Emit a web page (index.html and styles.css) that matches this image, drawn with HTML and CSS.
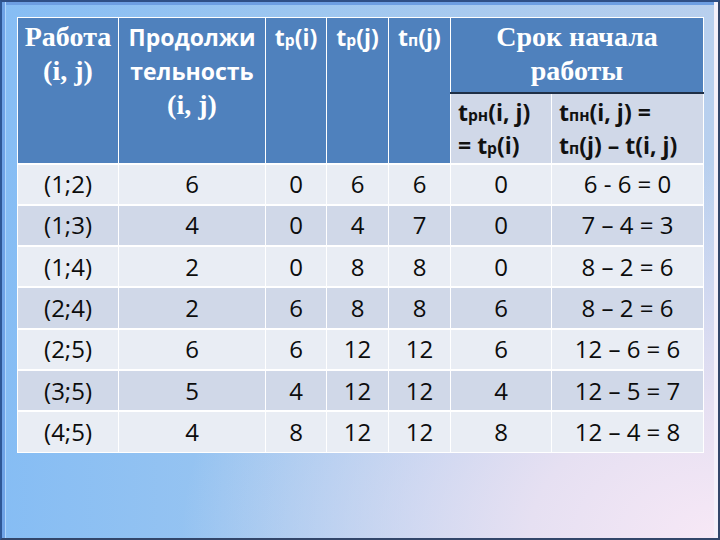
FILE: index.html
```html
<!DOCTYPE html>
<html lang="ru">
<head>
<meta charset="utf-8">
<title>Сроки начала работ</title>
<link rel="stylesheet" href="styles.css">
</head>
<body>
<div class="slide">
  <table class="grid">
    <colgroup>
      <col class="c1"><col class="c2"><col class="c3"><col class="c4"><col class="c5"><col class="c6"><col class="c7">
    </colgroup>
    <thead>
      <tr class="h1">
        <th rowspan="2" class="hd serif">Работа<br>(i, j)</th>
        <th rowspan="2" class="hd">Продолжи<br>тельность<br><span class="serif">(i, j)</span></th>
        <th rowspan="2" class="hd">t<span class="sub">р</span>(i)</th>
        <th rowspan="2" class="hd">t<span class="sub">р</span>(j)</th>
        <th rowspan="2" class="hd">t<span class="sub">п</span>(j)</th>
        <th colspan="2" class="hd serif">Срок начала<br>работы</th>
      </tr>
      <tr class="h2">
        <th class="sh">t<span class="sub">рн</span>(i, j)<br>= t<span class="sub">р</span>(i)</th>
        <th class="sh">t<span class="sub">пн</span>(i, j) =<br>t<span class="sub">п</span>(j) – t(i, j)</th>
      </tr>
    </thead>
    <tbody>
      <tr class="lt"><td>(1;2)</td><td>6</td><td>0</td><td>6</td><td>6</td><td>0</td><td>6 - 6 = 0</td></tr>
      <tr class="dk"><td>(1;3)</td><td>4</td><td>0</td><td>4</td><td>7</td><td>0</td><td>7 – 4 = 3</td></tr>
      <tr class="lt"><td>(1;4)</td><td>2</td><td>0</td><td>8</td><td>8</td><td>0</td><td>8 – 2 = 6</td></tr>
      <tr class="dk"><td>(2;4)</td><td>2</td><td>6</td><td>8</td><td>8</td><td>6</td><td>8 – 2 = 6</td></tr>
      <tr class="lt"><td>(2;5)</td><td>6</td><td>6</td><td>12</td><td>12</td><td>6</td><td>12 – 6 = 6</td></tr>
      <tr class="dk"><td>(3;5)</td><td>5</td><td>4</td><td>12</td><td>12</td><td>4</td><td>12 – 5 = 7</td></tr>
      <tr class="lt"><td>(4;5)</td><td>4</td><td>8</td><td>12</td><td>12</td><td>8</td><td>12 – 4 = 8</td></tr>
    </tbody>
  </table>
</div>
</body>
</html>
```
FILE: styles.css
```css
html, body {
  margin: 0;
  padding: 0;
}
body {
  width: 720px;
  height: 540px;
  overflow: hidden;
}
.slide {
  box-sizing: border-box;
  width: 720px;
  height: 540px;
  border: 2px solid #33466a;
  border-left-color: #2f5896;
  border-top-color: #2f4f86;
  padding: 15px 0 0 15px;
  background:
    radial-gradient(ellipse 75% 70% at 100% 100%, #f7e8f6 0%, #e6e0f2 35%, rgba(200, 216, 238, 0) 100%),
    linear-gradient(90deg, #86bdf4 0%, #9cc6f0 40%, #b9d0ee 100%);
  box-shadow: inset 3px 0 0 #6fa3e6, inset 4px 0 0 #b0d6fb, inset -4px 0 0 #f4f0fa, inset 0 3px 0 #6d9ee2;
  font-family: "Open Sans", "DejaVu Sans", sans-serif;
}
.grid {
  border-collapse: collapse;
  table-layout: fixed;
  width: 686px;
}
.c1 { width: 101px; }
.c2 { width: 147px; }
.c3 { width: 61px; }
.c4 { width: 62px; }
.c5 { width: 62px; }
.c6 { width: 101px; }
.c7 { width: 152px; }

th, td {
  padding: 0;
  border-left: 1px solid #ffffff;
  border-right: 1px solid #ffffff;
}
.hd {
  background: #4f81bd;
  color: #ffffff;
  font-weight: 700;
  font-size: 23px;
  line-height: 34px;
  vertical-align: top;
  text-align: center;
  padding-top: 2px;
  border-top: 1px solid #ffffff;
}
.serif {
  font-family: "Liberation Serif", "Times New Roman", serif;
  font-size: 28px;
}
.h1 { height: 75px; }
.h2 { height: 71px; }
.sh {
  background: #d0d8e8;
  color: #111111;
  font-weight: 700;
  font-size: 23px;
  line-height: 33px;
  text-align: left;
  vertical-align: top;
  padding: 2px 0 0 7px;
  border-top: 2px solid #1f2f46;
}
.sub {
  font-size: 0.68em;
  line-height: 1;
}
tbody tr {
  height: 41.3px;
}
tbody td {
  text-align: center;
  vertical-align: middle;
  font-size: 24px;
  color: #0c0c0c;
  border-top: 2px solid #ffffff;
  line-height: 30px;
}
.lt td { background: #e9edf4; }
.dk td { background: #d0d8e8; }
tbody tr:last-child td {
  border-bottom: 1px solid #ffffff;
}
```
